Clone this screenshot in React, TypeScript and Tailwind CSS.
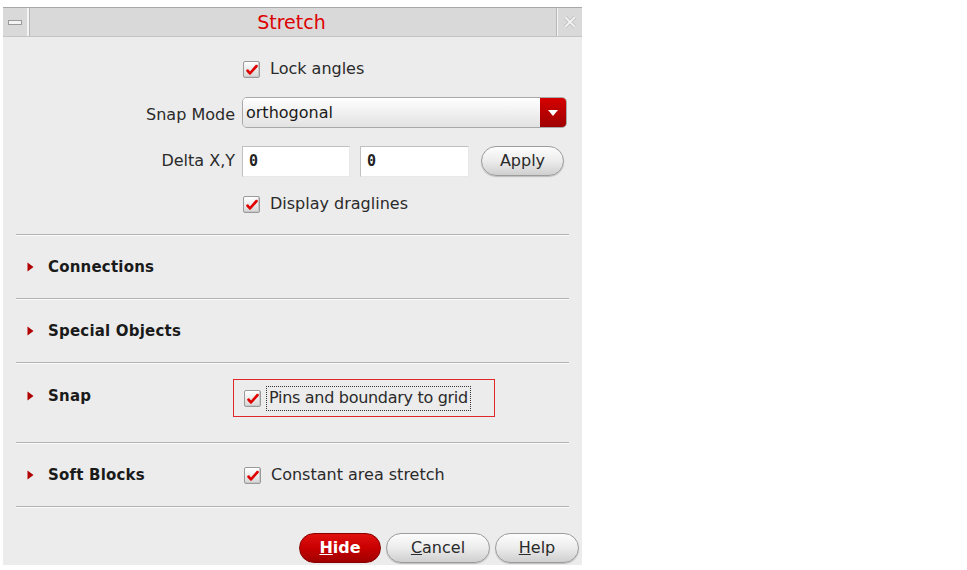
import React from "react";

const font = { fontFamily: '"DejaVu Sans", "Noto Sans", sans-serif' };

function Check() {
  return (
    <div className="w-[17px] h-[17px] rounded-[2px] border border-[#9a9a9a] bg-gradient-to-b from-[#ffffff] to-[#d6d6d6] shadow-[inset_-1px_-1px_0_#c8c8c8] flex items-center justify-center shrink-0">
      <svg width="14" height="13" viewBox="0 0 14 13">
        <path d="M1.5 6.5 L5 10.5 L12.5 1.5 L12.5 4 L5 12 L1.5 8.5 Z" fill="#d40000" />
        <path d="M2 6.8 L5 10.2 L12 2.2" stroke="#e00000" strokeWidth="2.4" fill="none" strokeLinejoin="round" />
      </svg>
    </div>
  );
}

function Tri() {
  return (
    <svg width="7" height="10" viewBox="0 0 7 10" className="shrink-0">
      <path d="M0.5 0.5 L6.5 5 L0.5 9.5 Z" fill="#b00000" />
    </svg>
  );
}

function Sep() {
  return <div className="mx-[13px] h-[2px] border-t border-[#b4b4b4] border-b border-b-[#fafafa]" />;
}

function Heading({ text }: { text: string }) {
  return (
    <div className="flex items-center w-[217px] h-[34px] pl-[24px] shrink-0">
      <Tri />
      <span className="ml-[14px] text-[15px] font-bold text-[#1a1a1a] tracking-[0.2px]">{text}</span>
    </div>
  );
}

const pill =
  "h-[30px] rounded-full border border-[#9c9c9c] bg-gradient-to-b from-[#fdfdfd] via-[#ececec] to-[#cfcfcf] shadow-[0_1px_1px_#bdbdbd] flex items-center justify-center text-[16px] text-[#2a2a2a]";

const input =
  "h-[31px] bg-white border-t border-l border-[#c0c0c0] border-r border-b border-r-[#e8e8e8] border-b-[#e8e8e8] flex items-center pl-[6px] text-[15px] font-bold text-[#222]";

export default function App() {
  return (
    <div className="w-[967px] h-[570px] bg-white overflow-hidden" style={font}>
      <div className="ml-[3px] mt-[7px] w-[579px] h-[558px] bg-[#ececec] border-t border-[#a8a8a8] flex flex-col">
        {/* title bar */}
        <div className="h-[29px] flex bg-[#d9d9d9] border-b border-[#c4c4c4]">
          <div className="w-[26px] border-r-2 border-[#f4f4f4] flex items-center justify-center shadow-[1px_0_0_#b8b8b8]">
            <div className="w-[14px] h-[5px] bg-[#f4f4f4] border border-[#9a9a9a]" />
          </div>
          <div className="flex-1 flex items-center justify-center text-[19px] text-[#dd0000] pr-[2px]">Stretch</div>
          <div className="w-[26px] border-l border-[#b8b8b8] shadow-[inset_1px_0_0_#f4f4f4] flex items-center justify-center">
            <svg width="14" height="14" viewBox="0 0 14 14">
              <path d="M2 2 L12 12 M12 2 L2 12" stroke="#bdbdbd" strokeWidth="3.5" />
              <path d="M2 2 L12 12 M12 2 L2 12" stroke="#f2f2f2" strokeWidth="1.8" />
            </svg>
          </div>
        </div>

        {/* top form */}
        <div className="flex flex-col">
          <div className="mt-[15px] h-[34px] flex items-center pl-[240px] gap-[10px]">
            <Check />
            <span className="text-[16px] text-[#2a2a2a]">Lock angles</span>
          </div>
          <div className="mt-[10px] h-[33px] flex items-center">
            <div className="w-[232px] text-right text-[16px] text-[#2a2a2a] pt-[4px]">Snap Mode</div>
            <div className="ml-[7px] w-[325px] h-[31px] flex rounded-[5px] border border-[#a8a8a8] overflow-hidden">
              <div className="flex-1 bg-gradient-to-b from-[#ffffff] to-[#e2e2e2] flex items-center pl-[3px] text-[16px] text-[#1a1a1a]">orthogonal</div>
              <div className="w-[26px] bg-gradient-to-b from-[#d40000] to-[#a00000] flex items-center justify-center">
                <svg width="10" height="6" viewBox="0 0 10 6"><path d="M0 0 L10 0 L5 6 Z" fill="#ffffff" /></svg>
              </div>
            </div>
          </div>
          <div className="mt-[16px] h-[32px] flex items-center">
            <div className="w-[232px] text-right text-[16px] text-[#2a2a2a]">Delta X,Y</div>
            <div className={`ml-[7px] w-[108px] ${input}`} style={{ fontFamily: '"DejaVu Sans Mono", monospace' }}>0</div>
            <div className={`ml-[10px] w-[109px] ${input}`} style={{ fontFamily: '"DejaVu Sans Mono", monospace' }}>0</div>
            <div className={`ml-[12px] w-[83px] ${pill}`}>Apply</div>
          </div>
          <div className="mt-[12px] h-[30px] flex items-center pl-[240px] gap-[10px]">
            <Check />
            <span className="text-[16px] text-[#2a2a2a]">Display draglines</span>
          </div>
        </div>

        <div className="mt-[15px]"><Sep /></div>

        <div className="h-[62px] flex items-center"><Heading text="Connections" /></div>
        <Sep />
        <div className="h-[62px] flex items-center"><Heading text="Special Objects" /></div>
        <Sep />
        <div className="h-[78px] flex items-start pt-[15px]">
          <Heading text="Snap" />
          <div className="ml-[13px] w-[262px] h-[38px] border border-[#e02828] flex items-center pl-[10px] gap-[5px]">
            <Check />
            <span className="border border-dotted border-[#333] px-[2px] h-[25px] flex items-center text-[16px] text-[#2a2a2a] tracking-[-0.3px]">Pins and boundary to grid</span>
          </div>
        </div>
        <Sep />
        <div className="h-[62px] flex items-center">
          <Heading text="Soft Blocks" />
          <div className="ml-[24px] flex items-center gap-[10px]">
            <Check />
            <span className="text-[16px] text-[#2a2a2a]">Constant area stretch</span>
          </div>
        </div>
        <Sep />

        <div className="mt-[25px] flex items-center pl-[296px] gap-[5px]">
          <div className="w-[82px] h-[30px] rounded-full border border-[#8a0000] bg-gradient-to-b from-[#e01010] via-[#c80000] to-[#a00000] flex items-center justify-center text-[16px] font-bold text-white">
            <span><span className="underline">H</span>ide</span>
          </div>
          <div className={`w-[104px] ${pill}`}>
            <span><span className="underline">C</span>ancel</span>
          </div>
          <div className={`w-[84px] ${pill}`}>
            <span><span className="underline">H</span>elp</span>
          </div>
        </div>
      </div>
    </div>
  );
}
